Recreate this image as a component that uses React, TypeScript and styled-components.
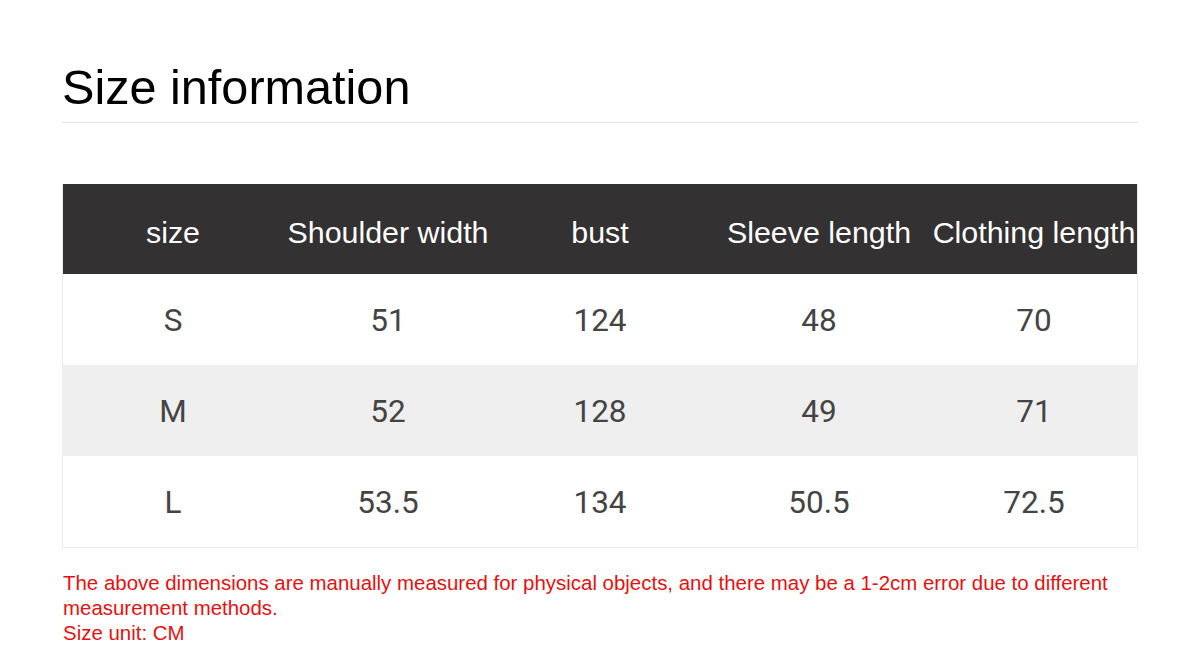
import styled, { createGlobalStyle } from 'styled-components'

const GlobalStyle = createGlobalStyle`
  body {
    margin: 0;
    background: #ffffff;
    font-family: 'Liberation Sans', Arial, sans-serif;
  }
`

const columns = ['220px', '210px', '214px', '224px', '1fr']

const headers = ['size', 'Shoulder width', 'bust', 'Sleeve length', 'Clothing length']

const rows = [
  ['S', '51', '124', '48', '70'],
  ['M', '52', '128', '49', '71'],
  ['L', '53.5', '134', '50.5', '72.5'],
]

const Page = styled.div`
  width: 1076px;
  padding: 63px 0 0 62px;
`

const Title = styled.h1`
  margin: 0;
  font-family: 'Liberation Sans', Arial, sans-serif;
  font-weight: 400;
  font-size: 48.6px;
  line-height: 49px;
  color: #000;
  padding-bottom: 10px;
  border-bottom: 1px solid #e6e6e6;
`

const Table = styled.div`
  margin-top: 61px;
  border: 1px solid #ececec;
  border-top: none;
`

const Row = styled.div<{ $bg: string; $height: number }>`
  display: grid;
  grid-template-columns: ${columns.join(' ')};
  height: ${p => p.$height}px;
  align-items: center;
  background: ${p => p.$bg};
`

const HeadCell = styled.div`
  text-align: center;
  color: #ffffff;
  font-family: 'Liberation Sans', Arial, sans-serif;
  font-size: 30.4px;
  white-space: nowrap;
  padding-top: 6px;
`

const Cell = styled.div`
  text-align: center;
  color: #444444;
  font-family: Roboto, 'Liberation Sans', sans-serif;
  font-size: 31.5px;
  white-space: nowrap;
  padding-top: 2px;
`

const Note = styled.p`
  margin: 22px 0 0 1px;
  color: #e8100f;
  font-family: 'Liberation Sans', Arial, sans-serif;
  font-size: 20.45px;
  line-height: 25px;
`

export default function App() {
  return (
    <>
      <GlobalStyle />
      <Page>
        <Title>Size information</Title>
        <Table>
          <Row $bg="#333131" $height={90}>
            {headers.map(h => (
              <HeadCell key={h}>{h}</HeadCell>
            ))}
          </Row>
          {rows.map((r, i) => (
            <Row key={r[0]} $bg={i === 1 ? '#efefef' : '#ffffff'} $height={91}>
              {r.map((v, j) => (
                <Cell key={j}>{v}</Cell>
              ))}
            </Row>
          ))}
        </Table>
        <Note>
          The above dimensions are manually measured for physical objects, and there may be a 1-2cm
          error due to different measurement methods.
          <br />
          Size unit: CM
        </Note>
      </Page>
    </>
  )
}
